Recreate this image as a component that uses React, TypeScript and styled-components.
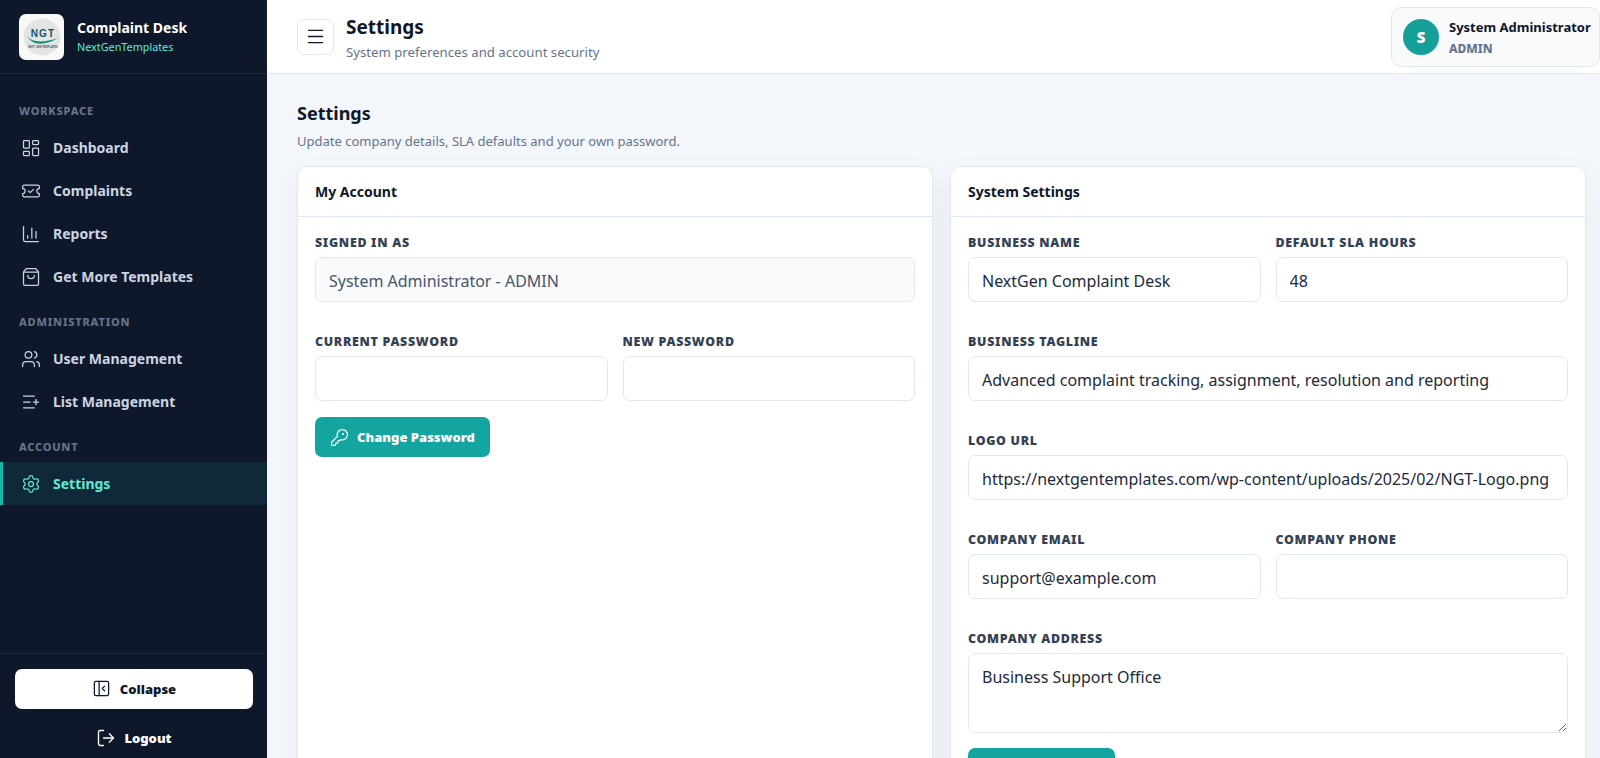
import styled, { createGlobalStyle } from 'styled-components';
import {
  LayoutDashboard,
  TicketCheck,
  ChartColumn,
  ShoppingBag,
  Users,
  ListPlus,
  Settings as SettingsIcon,
  PanelLeftClose,
  LogOut,
  Menu,
  KeyRound,
} from 'lucide-react';

const GlobalStyle = createGlobalStyle`
  html, body {
    margin: 0;
    height: 100%;
    overflow: hidden;
    background: #f3f6fb;
    font-family: 'Noto Sans', sans-serif;
  }
  * { box-sizing: border-box; }
`;

const navGroups = [
  {
    title: 'WORKSPACE',
    items: [
      { label: 'Dashboard', icon: LayoutDashboard },
      { label: 'Complaints', icon: TicketCheck },
      { label: 'Reports', icon: ChartColumn },
      { label: 'Get More Templates', icon: ShoppingBag },
    ],
  },
  {
    title: 'ADMINISTRATION',
    items: [
      { label: 'User Management', icon: Users },
      { label: 'List Management', icon: ListPlus },
    ],
  },
  {
    title: 'ACCOUNT',
    items: [{ label: 'Settings', icon: SettingsIcon, active: true }],
  },
];

const App = () => {
  return (
    <Shell>
      <GlobalStyle />
      <Sidebar>
        <Brand>
          <LogoBox>
            <svg width="42" height="42" viewBox="0 0 42 42">
              <circle cx="21" cy="21" r="18.5" fill="#e3e5e5" />
              <text x="22" y="21" textAnchor="middle" fontSize="10" fontWeight="900" letterSpacing="1.2" fill="#14566b" fontFamily="'Liberation Sans', sans-serif">NGT</text>
              <path d="M6 19 C10 27 22 27 37 22 C24 30 10 30 6 19 Z" fill="#129078" />
              <text x="22" y="32" textAnchor="middle" fontSize="2.6" fontWeight="700" fill="#4b5563" fontFamily="'Liberation Sans', sans-serif">NEXT GEN TEMPLATES</text>
            </svg>
          </LogoBox>
          <div>
            <BrandName>Complaint Desk</BrandName>
            <BrandSub>NextGenTemplates</BrandSub>
          </div>
        </Brand>
        <Nav>
          {navGroups.map((group) => (
            <div key={group.title}>
              <GroupTitle>{group.title}</GroupTitle>
              {group.items.map((item) => {
                const Icon = item.icon;
                return (
                  <NavItem key={item.label} $active={'active' in item}>
                    <Icon size={20} strokeWidth={1.5} />
                    {item.label}
                  </NavItem>
                );
              })}
            </div>
          ))}
        </Nav>
        <SideFooter>
          <CollapseButton>
            <PanelLeftClose size={19} strokeWidth={1.6} />
            Collapse
          </CollapseButton>
          <LogoutButton>
            <LogOut size={20} strokeWidth={1.6} />
            Logout
          </LogoutButton>
        </SideFooter>
      </Sidebar>
      <Main>
        <Header>
          <MenuButton>
            <Menu size={21} strokeWidth={1.7} />
          </MenuButton>
          <HeaderText>
            <HeaderTitle>Settings</HeaderTitle>
            <HeaderSub>System preferences and account security</HeaderSub>
          </HeaderText>
          <UserChip>
            <Avatar>S</Avatar>
            <UserText>
              <UserName>System Administrator</UserName>
              <UserRole>ADMIN</UserRole>
            </UserText>
          </UserChip>
        </Header>
        <Content>
          <PageTitle>Settings</PageTitle>
          <PageSub>Update company details, SLA defaults and your own password.</PageSub>
          <Cards>
            <Card>
              <CardHead>My Account</CardHead>
              <CardBody>
                <Field>
                  <Label>SIGNED IN AS</Label>
                  <Input $muted readOnly value="System Administrator - ADMIN" />
                </Field>
                <Row>
                  <Field>
                    <Label>CURRENT PASSWORD</Label>
                    <Input type="password" />
                  </Field>
                  <Field>
                    <Label>NEW PASSWORD</Label>
                    <Input type="password" />
                  </Field>
                </Row>
                <PrimaryButton>
                  <KeyRound size={19} strokeWidth={1.6} />
                  Change Password
                </PrimaryButton>
              </CardBody>
            </Card>
            <Card>
              <CardHead>System Settings</CardHead>
              <CardBody>
                <Row>
                  <Field>
                    <Label>BUSINESS NAME</Label>
                    <Input readOnly value="NextGen Complaint Desk" />
                  </Field>
                  <Field>
                    <Label>DEFAULT SLA HOURS</Label>
                    <Input readOnly value="48" />
                  </Field>
                </Row>
                <Field>
                  <Label>BUSINESS TAGLINE</Label>
                  <Input readOnly value="Advanced complaint tracking, assignment, resolution and reporting" />
                </Field>
                <Field>
                  <Label>LOGO URL</Label>
                  <Input readOnly value="https://nextgentemplates.com/wp-content/uploads/2025/02/NGT-Logo.png" />
                </Field>
                <Row>
                  <Field>
                    <Label>COMPANY EMAIL</Label>
                    <Input readOnly value="support@example.com" />
                  </Field>
                  <Field>
                    <Label>COMPANY PHONE</Label>
                    <Input readOnly value="" />
                  </Field>
                </Row>
                <Field>
                  <Label>COMPANY ADDRESS</Label>
                  <TextArea readOnly value="Business Support Office" />
                </Field>
                <PrimaryButton $wide aria-label="Save" />
              </CardBody>
            </Card>
          </Cards>
        </Content>
      </Main>
    </Shell>
  );
};

const Shell = styled.div`
  display: flex;
  height: 758px;
  overflow: hidden;
`;

const Sidebar = styled.aside`
  width: 267px;
  flex-shrink: 0;
  display: flex;
  flex-direction: column;
  background: #0f172a;
`;

const Brand = styled.div`
  height: 74px;
  display: flex;
  align-items: center;
  gap: 13px;
  padding: 0 19px;
  border-bottom: 1px solid #1e293b;
`;

const LogoBox = styled.div`
  width: 45px;
  height: 46px;
  border-radius: 7px;
  background: #f8f8f6;
  display: flex;
  align-items: center;
  justify-content: center;
`;

const BrandName = styled.div`
  color: #fff;
  font-size: 14px;
  font-weight: 700;
  line-height: 20px;
`;

const BrandSub = styled.div`
  margin-top: 1px;
  color: #5eead4;
  font-size: 10.8px;
  line-height: 16px;
`;

const Nav = styled.nav`
  flex: 1;
  padding-top: 29px;
  display: flex;
  flex-direction: column;
  gap: 16px;
`;

const GroupTitle = styled.div`
  color: #64748b;
  font-size: 11px;
  font-weight: 800;
  letter-spacing: 0.8px;
  line-height: 16px;
  padding: 0 19px;
  margin-bottom: 7px;
`;

const NavItem = styled.a<{ $active?: boolean }>`
  height: 43px;
  display: flex;
  align-items: center;
  gap: 12px;
  padding-left: ${(props) => (props.$active ? '18px' : '21px')};
  border-left: ${(props) => (props.$active ? '3px solid #14b8a6' : 'none')};
  background: ${(props) => (props.$active ? '#10293a' : 'transparent')};
  color: ${(props) => (props.$active ? '#5eead4' : '#cbd5e1')};
  font-size: 14px;
  font-weight: 700;
`;

const SideFooter = styled.div`
  border-top: 1px solid #1e293b;
  padding: 15px 14px 0 15px;
  height: 105px;
  display: flex;
  flex-direction: column;
  align-items: stretch;
`;

const CollapseButton = styled.button`
  height: 40px;
  border: none;
  border-radius: 7px;
  background: #fff;
  color: #0f172a;
  font-family: inherit;
  font-size: 13px;
  font-weight: 900;
  display: flex;
  align-items: center;
  justify-content: center;
  gap: 9px;
`;

const LogoutButton = styled.button`
  height: 40px;
  margin-top: 10px;
  border: none;
  background: transparent;
  color: #fff;
  font-family: inherit;
  font-size: 13px;
  font-weight: 900;
  display: flex;
  align-items: center;
  justify-content: center;
  gap: 8px;
`;

const Main = styled.main`
  flex: 1;
  min-width: 0;
  display: flex;
  flex-direction: column;
`;

const Header = styled.header`
  height: 74px;
  flex-shrink: 0;
  display: flex;
  align-items: center;
  gap: 12px;
  padding-left: 30px;
  background: #fff;
  border-bottom: 1px solid #e2e8f0;
`;

const MenuButton = styled.button`
  width: 37px;
  height: 36px;
  border: 1px solid #e2e8f0;
  border-radius: 7px;
  background: #fff;
  color: #0f172a;
  display: flex;
  align-items: center;
  justify-content: center;
  padding: 0;
`;

const HeaderText = styled.div`
  padding-top: 3px;
`;

const HeaderTitle = styled.div`
  color: #0f172a;
  font-size: 19px;
  font-weight: 700;
  line-height: 27px;
`;

const HeaderSub = styled.div`
  margin-top: 1px;
  color: #64748b;
  font-size: 13.2px;
  line-height: 20px;
`;

const UserChip = styled.div`
  margin-left: auto;
  width: 209px;
  height: 60px;
  display: flex;
  align-items: center;
  gap: 10px;
  padding-left: 11px;
  background: #f8fafc;
  border: 1px solid #e2e8f0;
  border-radius: 10px;
`;

const Avatar = styled.div`
  width: 36px;
  height: 36px;
  border-radius: 50%;
  background: #14a098;
  color: #fff;
  font-size: 15px;
  font-weight: 900;
  display: flex;
  align-items: center;
  justify-content: center;
`;

const UserText = styled.div`
  padding-top: 2px;
`;

const UserName = styled.div`
  color: #0f172a;
  font-size: 13px;
  font-weight: 700;
  line-height: 20px;
  white-space: nowrap;
`;

const UserRole = styled.div`
  margin-top: 2px;
  color: #64748b;
  font-size: 12px;
  font-weight: 800;
  line-height: 20px;
`;

const Content = styled.div`
  flex: 1;
  min-height: 0;
  padding: 26px 14px 0 30px;
`;

const PageTitle = styled.h1`
  margin: 0;
  color: #0f172a;
  font-size: 18px;
  font-weight: 700;
  line-height: 26px;
`;

const PageSub = styled.p`
  margin: 5px 0 0;
  color: #64748b;
  font-size: 13px;
  line-height: 20px;
`;

const Cards = styled.div`
  display: grid;
  grid-template-columns: 1fr 1fr;
  gap: 17px;
  margin-top: 15px;
`;

const Card = styled.section`
  background: #fff;
  border: 1px solid #e2e8f0;
  border-radius: 10px;
  box-shadow: 0 10px 30px rgba(15, 23, 42, 0.05);
`;

const CardHead = styled.div`
  height: 50px;
  display: flex;
  align-items: center;
  padding: 0 17px;
  border-bottom: 1px solid #e2e8f0;
  color: #0f172a;
  font-size: 14px;
  font-weight: 700;
`;

const CardBody = styled.div`
  padding: 17px 17px;
  display: flex;
  flex-direction: column;
  gap: 31px;
`;

const Row = styled.div`
  display: grid;
  grid-template-columns: 1fr 1fr;
  gap: 15px;
`;

const Field = styled.div`
  display: flex;
  flex-direction: column;
  gap: 5px;
  min-width: 0;
`;

const Label = styled.label`
  color: #334155;
  font-size: 12.4px;
  font-weight: 900;
  letter-spacing: 0.7px;
  line-height: 18px;
  white-space: nowrap;
`;

const Input = styled.input<{ $muted?: boolean }>`
  width: 100%;
  height: 45px;
  padding: 2px 12px 0 13px;
  border: 1px solid #e2e8f0;
  border-radius: 7px;
  outline: none;
  background: ${(props) => (props.$muted ? '#f8fafc' : '#fff')};
  color: ${(props) => (props.$muted ? '#475569' : '#1e293b')};
  font-family: inherit;
  font-size: 16px;
`;

const TextArea = styled.textarea`
  width: 100%;
  height: 80px;
  padding: 11px 12px 10px 13px;
  border: 1px solid #e2e8f0;
  border-radius: 7px;
  outline: none;
  color: #1e293b;
  font-family: inherit;
  font-size: 16px;
  line-height: 24px;
  resize: vertical;
`;

const PrimaryButton = styled.button<{ $wide?: boolean }>`
  align-self: flex-start;
  width: ${(props) => (props.$wide ? '147px' : '175px')};
  height: 40px;
  margin-top: ${(props) => (props.$wide ? '-16px' : '-15px')};
  border: none;
  border-radius: 7px;
  background: #14a5a0;
  color: #fff;
  font-family: inherit;
  font-size: 13px;
  font-weight: 900;
  display: flex;
  align-items: center;
  justify-content: center;
  gap: 8px;
`;

export default App;
